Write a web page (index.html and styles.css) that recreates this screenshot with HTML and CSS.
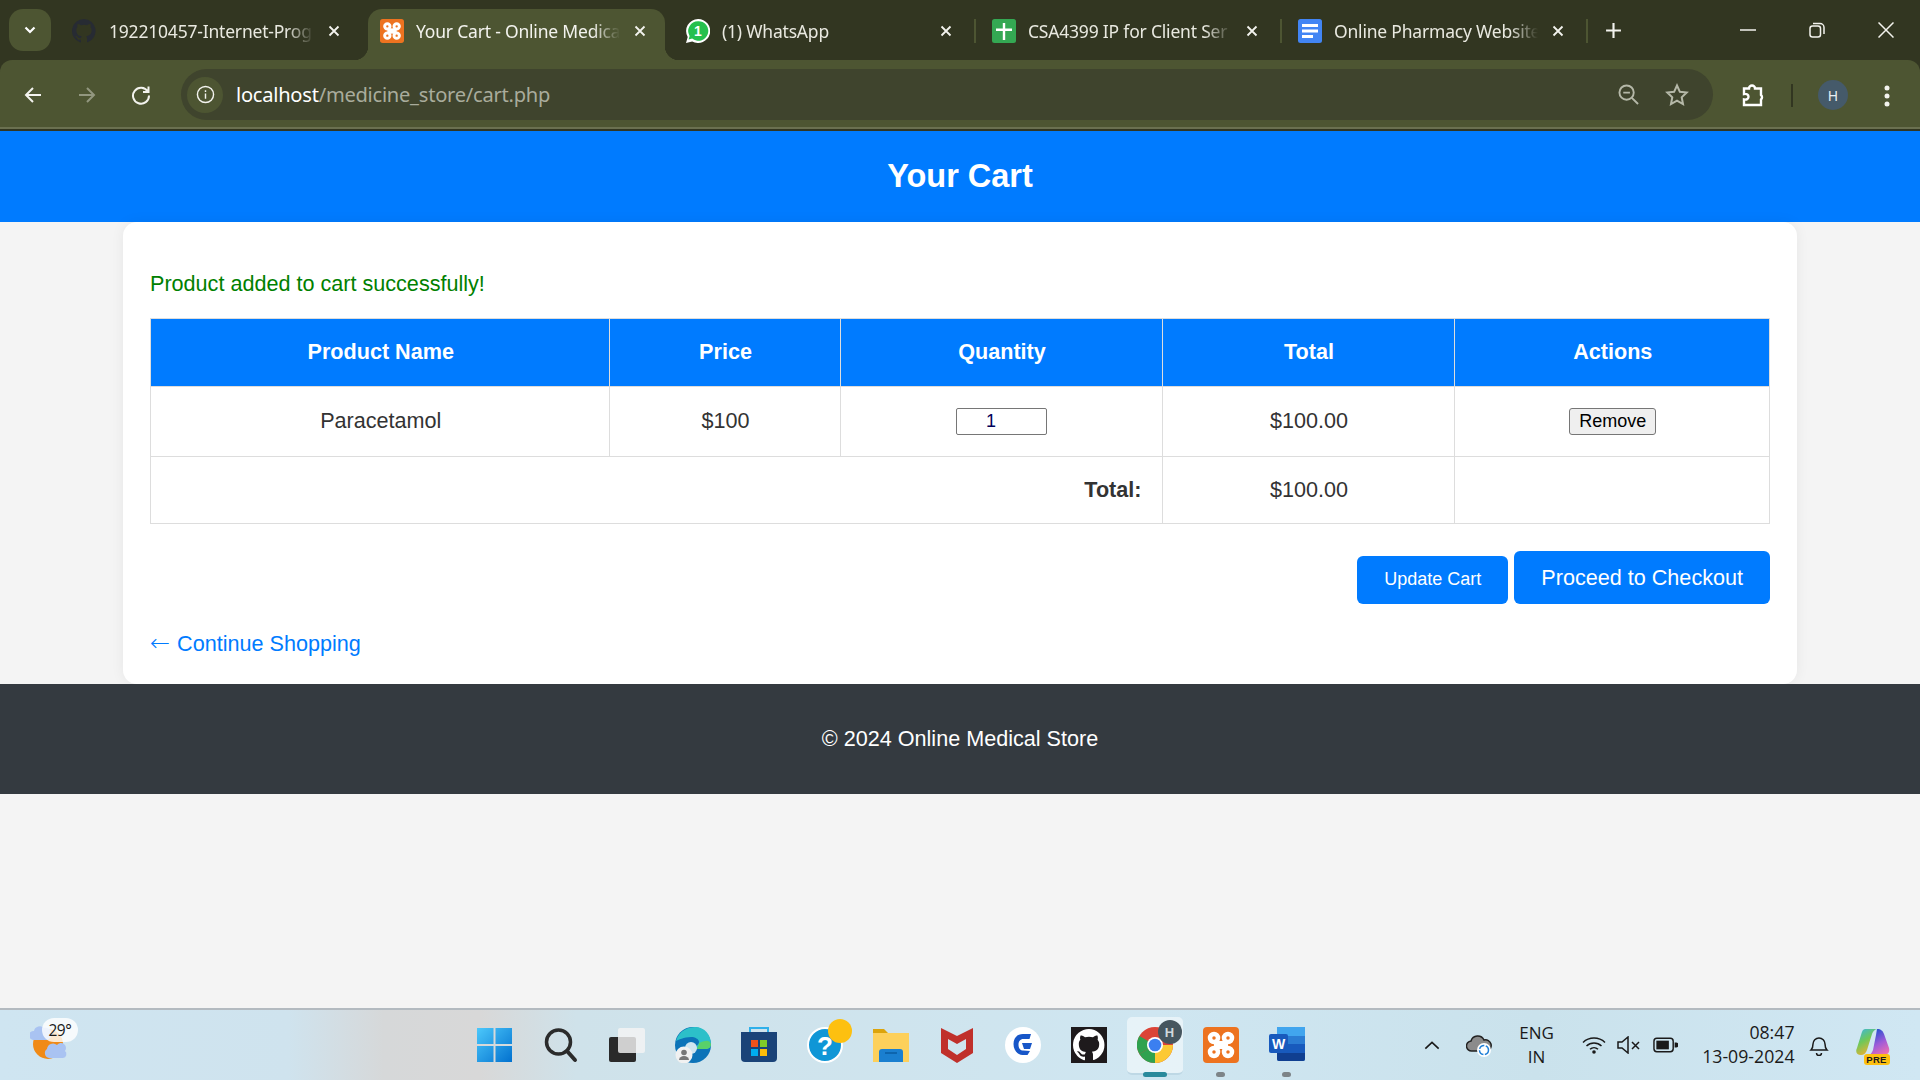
FILE: index.html
```html
<!DOCTYPE html>
<html lang="en">
<head>
<meta charset="utf-8">
<title>Your Cart - Online Medical Store</title>
<link rel="stylesheet" href="styles.css">
</head>
<body>
<div class="browser">
  <div class="tabstrip">
    <button class="tab-search"><svg width="14" height="14" viewBox="0 0 14 14"><path d="M2.500 4.500 7 9l4.500-4.500" fill="none" stroke="#fff" stroke-width="2.200"/></svg></button>
    <div class="tab tab-gap tab-first">
      <svg class="favicon" viewBox="0 0 16 16"><path fill="#272b33" d="M8 0a8 8 0 0 0-2.500 15.600c.4.100.5-.2.500-.4v-1.400c-2.200.5-2.700-1-2.700-1-.4-.9-.9-1.200-.9-1.200-.7-.5.100-.5.100-.5.800.1 1.200.8 1.200.8.700 1.200 1.900.9 2.300.7.100-.5.300-.9.500-1.100-1.800-.2-3.600-.9-3.600-4 0-.9.300-1.600.8-2.100-.1-.2-.4-1 .1-2.100 0 0 .7-.2 2.200.8a7.600 7.600 0 0 1 4 0c1.500-1 2.200-.8 2.200-.8.400 1.100.2 1.900.1 2.100.5.600.8 1.300.8 2.100 0 3.100-1.900 3.700-3.700 3.900.3.300.6.800.6 1.500v2.200c0 .2.100.5.500.4A8 8 0 0 0 8 0z"/></svg>
      <span class="tab-title">192210457-Internet-Prog</span>
      <svg class="tab-close" viewBox="0 0 12 12"><path d="M1.500 1.500l9 9M10.500 1.500l-9 9"/></svg>
    </div>
    <div class="tab tab-active tab-gap">
      <svg class="favicon" viewBox="0 0 36 36"><rect width="36" height="36" rx="4" fill="#ed7320"/><rect x="11" y="14" width="14" height="8" fill="#fff"/><g fill="#ed7320" stroke="#fff" stroke-width="4.500"><circle cx="11" cy="11" r="4"/><circle cx="25" cy="11" r="4"/><circle cx="11" cy="25" r="4"/><circle cx="25" cy="25" r="4"/></g></svg>
      <span class="tab-title">Your Cart - Online Medica</span>
      <svg class="tab-close" viewBox="0 0 12 12"><path d="M1.500 1.500l9 9M10.500 1.500l-9 9"/></svg>
    </div>
    <div class="tab">
      <svg class="favicon" viewBox="0 0 24 24"><path fill="#fff" d="M12 0a12 12 0 0 0-10.300 18L0 24l6.200-1.600A12 12 0 1 0 12 0z"/><path fill="#25c04d" d="M12 2.200A9.800 9.800 0 0 0 3.600 17l-1 3.500 3.600-1A9.800 9.800 0 1 0 12 2.200z"/><text class="wa-count" x="12" y="17">1</text></svg>
      <span class="tab-title">(1) WhatsApp</span>
      <svg class="tab-close" viewBox="0 0 12 12"><path d="M1.500 1.500l9 9M10.500 1.500l-9 9"/></svg>
    </div>
    <i class="tab-sep"></i>
    <div class="tab">
      <svg class="favicon" viewBox="0 0 24 24"><rect width="24" height="24" rx="2.500" fill="#34a853"/><path fill="#fff" d="M10.800 4h2.400v5.500H20v2.400h-6.800V21h-2.400v-9.100H4V9.500h6.800z"/></svg>
      <span class="tab-title">CSA4399 IP for Client Ser</span>
      <svg class="tab-close" viewBox="0 0 12 12"><path d="M1.500 1.500l9 9M10.500 1.500l-9 9"/></svg>
    </div>
    <i class="tab-sep"></i>
    <div class="tab">
      <svg class="favicon" viewBox="0 0 24 24"><rect width="24" height="24" rx="2.500" fill="#4285f4"/><path fill="#fff" d="M4 5h16v3H4zM4 10.500h16v3H4zM4 16h11v3H4z"/></svg>
      <span class="tab-title">Online Pharmacy Website</span>
      <svg class="tab-close" viewBox="0 0 12 12"><path d="M1.500 1.500l9 9M10.500 1.500l-9 9"/></svg>
    </div>
    <i class="tab-sep"></i>
    <svg class="new-tab" viewBox="0 0 16 16"><path d="M8 1v14M1 8h14"/></svg>
    <div class="win-controls">
      <svg viewBox="0 0 16 16"><path d="M0 8h16"/></svg>
      <svg viewBox="0 0 16 16"><rect x="1" y="4" width="10.500" height="11" rx="2.500"/><path d="M4 1.500h7a4 4 0 0 1 4 4V12"/></svg>
      <svg viewBox="0 0 16 16"><path d="M.5.500l15 15M15.500.500l-15 15"/></svg>
    </div>
  </div>
  <div class="toolbar">
    <svg class="nav-icon" viewBox="0 0 20 20"><path d="M18 10H3M10 3l-7 7 7 7"/></svg>
    <svg class="nav-icon nav-off" viewBox="0 0 20 20"><path d="M2 10h15M10 3l7 7-7 7"/></svg>
    <svg class="nav-icon" viewBox="0 0 20 20"><path d="M16.800 6.500A8 8 0 1 0 18 10.500M17.500 1.500v5.500H12"/></svg>
    <div class="omnibox">
      <span class="site-chip"><svg viewBox="0 0 20 20"><circle cx="10" cy="10" r="8.500"/><path d="M10 9v5.500M10 5.500v1.800"/></svg></span>
      <span class="url"><b>localhost</b>/medicine_store/cart.php</span>
      <svg class="omni-zoom" viewBox="0 0 22 22"><circle cx="9" cy="9" r="7.500"/><path d="M5.500 9h7M14.500 14.500l6.500 6.500"/></svg>
      <svg class="omni-star" viewBox="0 0 24 24"><path d="M12 2.500l2.900 6.300 6.800.8-5 4.700 1.300 6.800-6-3.400-6 3.400 1.300-6.800-5-4.700 6.800-.8z"/></svg>
    </div>
    <svg class="ext-icon" viewBox="0 0 24 24"><path d="M3 5.500h5a3 3 0 0 1 6 0h6v6.500a3 3 0 0 1 0 4.500V22H3v-5.500c3 .5 4.500-1 4.500-2.800S6 10.500 3 11z"/></svg>
    <i class="tool-sep"></i>
    <span class="avatar">H</span>
    <svg class="menu-dots" viewBox="0 0 6 24"><circle cx="3" cy="4" r="2.500"/><circle cx="3" cy="12" r="2.500"/><circle cx="3" cy="20" r="2.500"/></svg>
  </div>
</div>

<header class="page-header"><h1>Your Cart</h1></header>

<main class="container">
  <p class="message">Product added to cart successfully!</p>
  <table class="cart">
    <thead>
      <tr>
        <th class="col-name">Product Name</th>
        <th class="col-price">Price</th>
        <th class="col-qty">Quantity</th>
        <th class="col-total">Total</th>
        <th class="col-actions">Actions</th>
      </tr>
    </thead>
    <tbody>
      <tr class="item-row">
        <td>Paracetamol</td>
        <td>$100</td>
        <td><input class="qty" type="number" value="1"></td>
        <td>$100.00</td>
        <td><button class="remove">Remove</button></td>
      </tr>
      <tr class="total-row">
        <td colspan="3" class="total-label">Total:</td>
        <td>$100.00</td>
        <td></td>
      </tr>
    </tbody>
  </table>
  <div class="actions">
    <button class="btn btn-update">Update Cart</button>
    <a class="btn btn-checkout">Proceed to Checkout</a>
  </div>
  <a class="continue"><span class="arrow">←</span> Continue Shopping</a>
</main>

<footer class="page-footer">© 2024 Online Medical Store</footer>

<div class="spacer"></div>

<div class="taskbar">
  <div class="weather">
    <svg class="weather-icon" viewBox="0 0 50 44"><circle cx="18" cy="21" r="15" fill="#f08a16"/><path d="M3 17a4.500 4.500 0 0 1 1-9 6 6 0 0 1 10-3 5 5 0 0 1 3 12z" fill="#a9c3f2"/><path d="M19 35a5 5 0 0 1-2-9 6 6 0 0 1 10-4 5 5 0 0 1 8 6 4 4 0 0 1-2 7z" fill="#a9c3f2"/></svg>
    <span class="temp">29°</span>
  </div>
  <div class="task-icons">
    <svg class="ti" viewBox="0 0 36 36"><defs><linearGradient id="w" x1="0" y1="0" x2="1" y2="1"><stop offset="0" stop-color="#4cc8fb"/><stop offset="1" stop-color="#0271cf"/></linearGradient></defs><path fill="url(#w)" d="M0 1h16.500v16H0zM18.500 1H35v16H18.500zM0 19h16.500v16H0zM18.500 19H35v16H18.500z"/></svg>
    <svg class="ti" viewBox="0 0 36 36"><circle cx="15.500" cy="15" r="12" fill="none" stroke="#2b2b2b" stroke-width="3.500"/><path d="M24 24l8 9" stroke="#2b2b2b" stroke-width="4" stroke-linecap="round"/></svg>
    <svg class="ti" viewBox="0 0 36 36"><rect x="0" y="10" width="27" height="25" rx="2" fill="#2a2a2a"/><rect x="9" y="1" width="27" height="25" rx="2" fill="#f4f4f4" opacity=".82"/></svg>
    <svg class="ti" viewBox="0 0 36 36"><circle cx="18" cy="18" r="18" fill="#0c73b8"/><path d="M1 14C4 3 14 0 20 0c10 0 16 8 16 17 0 3-2 5-6 5H20c0-3 4-4 4-7 0-3-4-5-8-5C9 10 3 13 1 14z" fill="#2cc0c9"/><path d="M36 17c0 3-2 5-6 5H22c0-2 2-3 2-6 8-3 10-3 12 1z" fill="#58d16a"/><circle cx="16" cy="21" r="6" fill="#cfe5f0"/><circle cx="9" cy="28" r="8.500" fill="#f1f1f1"/><circle cx="9" cy="25.500" r="2.800" fill="#777"/><path d="M4 33a5 4 0 0 1 10 0z" fill="#777"/></svg>
    <svg class="ti" viewBox="0 0 36 36"><path d="M9 7V1h18v6" fill="none" stroke="#2fb0ea" stroke-width="2"/><path d="M0 5h36v26a4 4 0 0 1-4 4H4a4 4 0 0 1-4-4z" fill="#1a4378"/><path fill="#f1511b" d="M10 13h7v7h-7z"/><path fill="#80cc28" d="M19 13h7v7h-7z"/><path fill="#00adef" d="M10 22h7v7h-7z"/><path fill="#fbbc09" d="M19 22h7v7h-7z"/></svg>
    <div class="ti ti-help">
      <svg class="ti" viewBox="0 0 36 36"><circle cx="18" cy="18" r="17" fill="#0f96d6" stroke="#fff" stroke-width="2"/><text class="help-mark" x="18" y="28">?</text></svg>
      <i class="help-dot"></i>
    </div>
    <svg class="ti" viewBox="0 0 36 36"><path d="M0 2h11l4 4h21v28H0z" fill="#dca40c"/><path d="M0 6h36v29H0z" fill="#fdd05b"/><path d="M6 35V25a3 3 0 0 1 3-3h18a3 3 0 0 1 3 3v10z" fill="#1a7fd0"/><path d="M12 26h12" stroke="#0a5ca3" stroke-width="1.500"/></svg>
    <svg class="ti" viewBox="0 0 36 36"><path fill-rule="evenodd" d="M2 1l16 8 16-8v25l-16 10L2 26zM9 12v10l9 6 9-6V12l-9 5z" fill="#c0302b"/></svg>
    <svg class="ti" viewBox="0 0 36 36"><circle cx="18" cy="18" r="18" fill="#fff"/><path d="M26 7H18C12 7 8.500 11 8.500 17c0 6 4 11 9 11h5l2.500-4-7-.5c-3 0-4.500-2.500-4.500-6 0-3 1.500-5.500 5-5.500h6z" fill="#1756c8"/><path d="M17 16h10l-2 6h-6z" fill="#1756c8"/></svg>
    <svg class="ti" viewBox="0 0 36 36"><rect width="36" height="36" fill="#1e1a1c"/><g transform="translate(2 2) scale(2)"><path fill="#fff" d="M8 0a8 8 0 0 0-2.500 15.600c.4.100.5-.2.500-.4v-1.400c-2.200.5-2.700-1-2.700-1-.4-.9-.9-1.200-.9-1.200-.7-.5.100-.5.100-.5.800.1 1.200.8 1.200.8.700 1.200 1.900.9 2.300.7.100-.5.300-.9.500-1.100-1.800-.2-3.600-.9-3.600-4 0-.9.300-1.600.8-2.100-.1-.2-.4-1 .1-2.100 0 0 .7-.2 2.200.8a7.600 7.600 0 0 1 4 0c1.500-1 2.200-.8 2.200-.8.400 1.100.2 1.900.1 2.100.5.600.8 1.300.8 2.100 0 3.100-1.900 3.700-3.700 3.900.3.300.6.800.6 1.500v2.200c0 .2.100.5.500.4A8 8 0 0 0 8 0z"/></g></svg>
    <div class="ti ti-chrome">
      <svg class="ti" viewBox="0 0 36 36"><circle cx="18" cy="18" r="18" fill="#db4437"/><path d="M18 18L2.400 27A18 18 0 0 1 2.400 9z" fill="#2fa24f"/><path d="M18 18L2.400 27A18 18 0 0 0 18 36l9-18z" fill="#2fa24f"/><path d="M18 18h18A18 18 0 0 1 18 36z" fill="#fcc934"/><circle cx="18" cy="18" r="8" fill="#fff"/><circle cx="18" cy="18" r="6.300" fill="#3b7ff0"/></svg>
      <span class="chrome-badge">H</span>
      <i class="run-active"></i>
    </div>
    <div class="ti ti-running">
      <svg class="ti" viewBox="0 0 36 36"><rect width="36" height="36" rx="4" fill="#ed7320"/><rect x="11" y="14" width="14" height="8" fill="#fff"/><g fill="#ed7320" stroke="#fff" stroke-width="4.500"><circle cx="11" cy="11" r="4"/><circle cx="25" cy="11" r="4"/><circle cx="11" cy="25" r="4"/><circle cx="25" cy="25" r="4"/></g></svg>
      <i class="run-dot"></i>
    </div>
    <div class="ti ti-running">
      <svg class="ti" viewBox="0 0 36 36"><rect x="8" y="0" width="28" height="34" rx="2" fill="#2b7cd3"/><path d="M8 0h28v9H8z" fill="#41a5ee"/><path d="M8 17h28v9H8z" fill="#185abd"/><path d="M8 26h28v6a2 2 0 0 1-2 2H10a2 2 0 0 1-2-2z" fill="#103f91"/><rect x="0" y="7" width="19" height="19" rx="2" fill="#185abd"/><text class="word-w" x="9.500" y="21.500">W</text></svg>
      <i class="run-dot"></i>
    </div>
  </div>
  <div class="tray">
    <svg class="tray-chevron" viewBox="0 0 18 10"><path d="M1.500 9L9 2l7.500 7"/></svg>
    <svg class="tray-cloud" viewBox="0 0 26 24"><path d="M6 18a5 5 0 0 1-1-10 7 7 0 0 1 13-1 5 5 0 0 1 3 11z" fill="#8b8b8b" stroke="#222" stroke-width="1.500"/><circle cx="18" cy="17" r="7" fill="#fff"/><circle cx="18" cy="17" r="4.500" fill="none" stroke="#1f7fd8" stroke-width="1.500" stroke-dasharray="6 1.500"/></svg>
    <div class="lang"><span>ENG</span><span>IN</span></div>
    <svg class="tray-wifi" viewBox="0 0 24 18"><path d="M1 6.500a16 16 0 0 1 22 0M4.500 10a11 11 0 0 1 15 0M8 13.300a6 6 0 0 1 8 0"/><circle cx="12" cy="16" r="1.800" fill="#1a1a1a" stroke="none"/></svg>
    <svg class="tray-sound" viewBox="0 0 24 18"><path d="M1 6v6h4l6 5V1L5 6zM15 6l7 7M22 6l-7 7"/></svg>
    <svg class="tray-battery" viewBox="0 0 26 16"><rect x="1" y="1" width="20" height="14" rx="3" fill="none" stroke="#1a1a1a" stroke-width="1.500"/><rect x="3.500" y="3.500" width="13" height="9" fill="#1a1a1a"/><path d="M22.500 5.500h1.500a1.500 1.500 0 0 1 0 5h-1.500z" fill="#1a1a1a"/></svg>
    <div class="clock"><span>08:47</span><span>13-09-2024</span></div>
    <svg class="tray-bell" viewBox="0 0 20 22"><path d="M2 16c1.500-1.500 2-3 2-6a6 6 0 0 1 12 0c0 3 .5 4.500 2 6zM7.500 19a2.500 2.500 0 0 0 5 0"/></svg>
    <div class="copilot">
      <svg viewBox="0 0 34 30"><defs><linearGradient id="c" x1="0" y1="0" x2=".5" y2="1"><stop offset="0" stop-color="#38b5e8"/><stop offset=".5" stop-color="#6ec85a"/><stop offset="1" stop-color="#f0b030"/></linearGradient><linearGradient id="d" x1=".3" y1="0" x2=".8" y2="1"><stop offset="0" stop-color="#1a4fd0"/><stop offset=".55" stop-color="#a05cd8"/><stop offset="1" stop-color="#f070b0"/></linearGradient></defs><path d="M21 1c4 0 6 2 7 5l5 14c1 4-1 7-5 7H12c2 0 4-2 5-5l3-15z" fill="url(#d)"/><path d="M9 1h13c-3 0-5 2-6 5l-5 16c-1 3-3 5-6 5-4 0-6-3-4-7L5 7c1-4 2-6 4-6z" fill="url(#c)"/></svg>
      <span class="pre">PRE</span>
    </div>
  </div>
</div>
</body>
</html>
```
FILE: styles.css
```css
* { box-sizing: border-box; }
html, body { margin: 0; height: 100%; }
body {
  display: flex;
  flex-direction: column;
  height: 1080px;
  overflow: hidden;
  background: #f4f4f4;
  font-family: "Liberation Sans", Arial, sans-serif;
  color: #333;
}

/* browser chrome */
.browser { flex: none; height: 131px; background: #323621; font-family: "Noto Sans", "Open Sans", sans-serif; }
.tabstrip { display: flex; align-items: flex-start; height: 60px; padding: 9px 0 0 9px; }
.tab-search { flex: none; width: 42px; height: 42px; margin-right: 11px; border: 0; border-radius: 14px; background: #4d5532; display: flex; align-items: center; justify-content: center; padding: 0; }
.tab { flex: none; position: relative; width: 297px; height: 51px; display: flex; align-items: center; padding: 0 19px 8px 12px; color: #e9e9e0; }
.tab-gap { margin-right: 9px; }
.tab-first { padding-left: 10px; }
.tab-first .favicon { margin-right: 13px; }
.tab-active { background: #4d5532; border-radius: 14px 14px 0 0; color: #f3f3ee; }
.tab-active::before, .tab-active::after { content: ""; position: absolute; bottom: 0; width: 14px; height: 14px; }
.tab-active::before { left: -14px; background: radial-gradient(circle at 0 0, transparent 14px, #4d5532 14.500px); }
.tab-active::after { right: -14px; background: radial-gradient(circle at 100% 0, transparent 14px, #4d5532 14.500px); }
.favicon { flex: none; width: 24px; height: 24px; margin-right: 12px; }
.tab-title { flex: 1; min-width: 0; padding-top: 1px; white-space: nowrap; font-size: 17.500px; letter-spacing: -.2px; -webkit-mask-image: linear-gradient(to right, #000 calc(100% - 30px), transparent calc(100% - 2px)); mask-image: linear-gradient(to right, #000 calc(100% - 30px), transparent calc(100% - 2px)); }
.tab-close { flex: none; width: 12px; height: 12px; margin-left: 12px; fill: none; stroke: #f3f3ee; stroke-width: 1.800; }
.tab-sep { flex: none; width: 2px; height: 24px; margin: 10px 4px 0 3px; background: #4d5532; }
.new-tab { flex: none; width: 17px; height: 17px; margin: 13px 0 0 13px; fill: none; stroke: #f3f3ee; stroke-width: 2; }
.win-controls { flex: none; display: flex; align-items: center; gap: 53px; margin: 13px 0 0 118px; }
.win-controls svg { width: 16px; height: 16px; fill: none; stroke: #f3f3ee; stroke-width: 1.500; }

.toolbar { height: 69px; border-bottom: 2px solid #6a7050; background: #4d5532; border-radius: 12px 12px 0 0; display: flex; align-items: flex-start; padding: 9px 0 0 23px; }
.nav-icon { flex: none; width: 20px; height: 20px; margin: 16px 34px 0 0; fill: none; stroke: #f3f3ee; stroke-width: 2; }
.nav-off { stroke: #92977f; }
.omnibox { flex: none; width: 1532px; height: 51px; margin-left: -4px; border-radius: 26px; background: #3f442d; display: flex; align-items: center; padding: 0 24px 0 6px; }
.site-chip { flex: none; width: 36px; height: 36px; border-radius: 50%; background: #4d5532; display: flex; align-items: center; justify-content: center; }
.site-chip svg { width: 19px; height: 19px; fill: none; stroke: #f3f3ee; stroke-width: 1.500; }
.url { flex: 1; margin-left: 13px; padding-bottom: 1px; font-size: 20.100px; letter-spacing: -.25px; color: #a9ac9c; white-space: nowrap; }
.url b { font-weight: 400; color: #fff; }
.omni-zoom { flex: none; width: 21px; height: 21px; fill: none; stroke: #b5b8a8; stroke-width: 2; margin-right: 26px; }
.omni-star { flex: none; width: 24px; height: 24px; fill: none; stroke: #b5b8a8; stroke-width: 2; }
.ext-icon { flex: none; width: 24px; height: 24px; margin: 14px 0 0 28px; fill: none; stroke: #fff; stroke-width: 2.400; }
.tool-sep { flex: none; width: 2px; height: 23px; margin: 15px 0 0 26px; background: #323621; }
.avatar { flex: none; width: 30px; height: 30px; margin: 11px 0 0 25px; border-radius: 50%; background: #455a6a; color: #e8eef2; font-size: 14px; display: flex; align-items: center; justify-content: center; }
.menu-dots { flex: none; width: 6px; height: 24px; margin: 15px 0 0 36px; fill: #f3f3ee; }

/* page */
.page-header { flex: none; height: 91px; background: #007bff; display: flex; align-items: center; justify-content: center; }
.page-header h1 { margin: 0; font-size: 32.500px; font-weight: 700; color: #fff; }
.container { flex: none; width: 1674px; height: 462px; margin: 0 auto; padding: 49px 27px 0; background: #fff; border-radius: 14px; box-shadow: 0 0 14px rgba(0,0,0,.06); }
.message { margin: 0 0 22px; font-size: 21.600px; line-height: 25px; color: #008000; }
.cart { width: 1619px; table-layout: fixed; border-collapse: collapse; font-size: 21.600px; line-height: 25px; }
.cart th, .cart td { border: 1px solid #ddd; padding: 20px 20px 22px 22px; text-align: center; }
.cart th { background: #007bff; color: #fff; font-weight: 700; height: 68px; }
.cart .item-row td { height: 70px; padding: 0 0 2px 2px; }
.cart .total-row td { padding: 20px 20px 21px 22px; }
.col-name { width: 458.500px; }
.col-price { width: 231px; }
.col-qty { width: 322px; }
.col-total { width: 292px; }
.col-actions { width: 315.500px; }
.cart .total-label { text-align: right; font-weight: 700; }
.qty { width: 91px; height: 27px; vertical-align: middle; padding: 0 7px 0 2px; border: 1px solid #767676; border-radius: 2px; background: #fff; color: #00005a; font: 18px "Liberation Sans", Arial, sans-serif; text-align: center; appearance: textfield; margin: 2px 0 0 -2px; }
.remove { height: 27px; width: 87px; padding: 0; vertical-align: middle; border: 1px solid #767676; border-radius: 3px; background: #efefef; color: #000; font: 18px "Liberation Sans", Arial, sans-serif; margin-top: 2px; }
.actions { display: flex; justify-content: flex-end; align-items: flex-end; gap: 6px; margin-top: 27px; }
.btn { border: 0; border-radius: 6px; background: #007bff; color: #fff; font-family: "Liberation Sans", Arial, sans-serif; padding: 0 27px; display: flex; align-items: center; }
.btn-update { height: 48px; font-size: 18px; width: 151px; justify-content: center; padding: 0 0 2px; }
.btn-checkout { height: 53px; font-size: 21.600px; }
.continue { display: block; margin-top: 27px; font-size: 21.600px; line-height: 25px; color: #007bff; }
.arrow { font-family: "DejaVu Sans", sans-serif; font-size: 24px; line-height: 0; font-weight: 200; margin-right: 1px; }
.page-footer { flex: none; height: 110px; background: #343a40; color: #fff; font-size: 21.600px; display: flex; align-items: center; justify-content: center; }
.spacer { flex: 1; }

/* taskbar */
.taskbar { flex: none; height: 72px; border-top: 2px solid #b3bac0; display: flex; align-items: flex-start; font-family: "Open Sans", "Noto Sans", sans-serif; color: #1a1a1a;
  background: linear-gradient(90deg, #cfe5f1 0%, #cfe3ee 15%, #d6d8d9 20%, #d8d8d8 25%, #cfe2ea 30%, #cfe6f1 60%, #cae2ec 80%, #d0e7f3 100%); }
.weather { flex: none; position: relative; width: 60px; height: 50px; margin: 13px 0 0 30px; }
.weather-icon { display: block; width: 50px; height: 44px; }
.temp { position: absolute; left: 12px; top: -5px; width: 36px; height: 24px; border-radius: 12px; background: rgba(255,255,255,.8); font-size: 15.500px; letter-spacing: -.4px; text-align: center; line-height: 24px; }
.task-icons { flex: none; display: flex; gap: 30px; margin: 17px 0 0 386.500px; }
.ti { flex: none; display: block; width: 36px; height: 36px; position: relative; }
.help-mark { font: 700 26px "Liberation Sans", Arial, sans-serif; fill: #fff; text-anchor: middle; }
.help-dot { position: absolute; top: -8px; right: -9px; width: 24px; height: 24px; border-radius: 50%; background: #fdc010; }
.ti-chrome::before { content: ""; position: absolute; left: -10px; top: -10px; width: 56px; height: 56px; border-radius: 5px; background: rgba(255,255,255,.5); border-bottom: 2px solid rgba(150,190,210,.5); }
.chrome-badge { position: absolute; top: -7px; right: -9px; width: 24px; height: 24px; border-radius: 50%; background: #46565f; color: #d0d8dc; font: 700 13px "Liberation Sans", Arial, sans-serif; display: flex; align-items: center; justify-content: center; }
.run-active { position: absolute; left: 6px; bottom: -14px; width: 24px; height: 5px; border-radius: 3px; background: #2a8a9c; }
.run-dot { position: absolute; left: 13.500px; bottom: -14px; width: 9px; height: 5px; border-radius: 3px; background: #7d8488; }
.word-w { font: 700 14px "Liberation Sans", Arial, sans-serif; fill: #fff; text-anchor: middle; }
.wa-count { font: 700 14px "Liberation Sans", Arial, sans-serif; fill: #fff; text-anchor: middle; }
.tray { flex: none; display: flex; align-items: center; height: 70px; margin-left: 119px; }
.tray svg { flex: none; }
.tray-chevron { width: 16px; height: 10px; fill: none; stroke: #1a1a1a; stroke-width: 1.800; }
.tray-cloud { width: 26px; height: 24px; margin-left: 26px; }
.lang { display: flex; flex-direction: column; align-items: center; width: 38px; margin-left: 26px; font-size: 17px; line-height: 24px; }
.tray-wifi { width: 24px; height: 18px; margin-left: 26px; fill: none; stroke: #1a1a1a; stroke-width: 1.500; }
.tray-sound { width: 24px; height: 18px; margin-left: 11px; fill: none; stroke: #1a1a1a; stroke-width: 1.500; }
.tray-battery { width: 25px; height: 16px; margin-left: 12.500px; }
.clock { display: flex; flex-direction: column; align-items: flex-end; width: 116.500px; margin-bottom: 2px; font-size: 17.700px; line-height: 24px; }
.tray-bell { width: 20px; height: 22px; margin-left: 14px; fill: none; stroke: #1a1a1a; stroke-width: 1.500; }
.copilot { flex: none; position: relative; width: 34px; height: 34px; margin-left: 27px; }
.copilot svg { width: 34px; height: 30px; display: block; }
.pre { position: absolute; left: 8px; bottom: -3px; width: 26px; height: 11px; border-radius: 3px; background: #fdc010; color: #1a1a1a; font: 700 9.500px/11px "Liberation Sans", Arial, sans-serif; text-align: center; letter-spacing: .3px; }
```
